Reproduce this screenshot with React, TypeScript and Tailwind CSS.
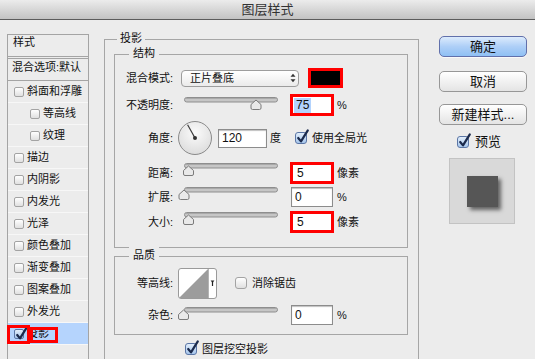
import React from "react";

type CheckProps = { checked?: boolean; size?: "sm" | "md" };

function Check({ checked = false, size = "md" }: CheckProps) {
  const dim = size === "sm" ? "w-[10px] h-[10px] rounded-[2px]" : "w-[12px] h-[12px] rounded-[3px]";
  const skin = checked
    ? "border-[#5b76a6] bg-linear-to-b from-[#e2eefb] to-[#a6c6ec]"
    : "border-[#a3a3a3] bg-linear-to-b from-white to-[#e0e0e0]";
  return (
    <span className={`relative inline-block shrink-0 border ${dim} ${skin}`}>
      {checked && (
        <svg
          className="absolute left-[0px] top-[-4px] overflow-visible"
          width="13"
          height="15"
          viewBox="0 0 13 15"
        >
          <path
            d="M2.2 9 L5 12.4 L11.8 1.4"
            fill="none"
            stroke="#1b2a4c"
            strokeWidth="2.2"
            strokeLinecap="round"
            strokeLinejoin="round"
          />
        </svg>
      )}
    </span>
  );
}

function Slider({ pos }: { pos: number }) {
  const p = pos;
  return (
    <svg width="102" height="14" viewBox="0 0 102 14" className="shrink-0 block">
      <rect x="6.5" y="0.5" width="93" height="4.5" rx="2.2" fill="#c6c6c6" stroke="#8e8e8e" />
      <line x1="8" y1="1.5" x2="98" y2="1.5" stroke="#a9a9a9" />
      <path
        d={`M${p} 3 L${p + 5} 7.5 L${p + 5} 11 Q${p + 5} 12.5 ${p + 3.5} 12.5 L${p - 3.5} 12.5 Q${p - 5} 12.5 ${p - 5} 11 L${p - 5} 7.5 Z`}
        fill="#e9e9e9"
        stroke="#7b7b7b"
      />
    </svg>
  );
}

function Dial() {
  return (
    <svg width="36" height="36" viewBox="0 0 36 36" className="shrink-0 block">
      <defs>
        <radialGradient id="dialg" cx="50%" cy="35%" r="70%">
          <stop offset="0" stopColor="#fbfbfb" />
          <stop offset="1" stopColor="#dadada" />
        </radialGradient>
      </defs>
      <circle cx="18" cy="18" r="16.5" fill="url(#dialg)" stroke="#8a8a8a" />
      <line x1="18" y1="18" x2="10.6" y2="4.8" stroke="#3a3a3a" strokeWidth="1.2" />
      <circle cx="18" cy="18" r="2" fill="#333" />
    </svg>
  );
}

function Contour() {
  return (
    <svg width="39" height="31" viewBox="0 0 39 31" className="shrink-0 block">
      <rect x="0.5" y="0.5" width="38" height="30" rx="2.5" fill="#fff" stroke="#9a9a9a" />
      <path d="M1 30 L30 1 L30 30 Z" fill="#9c9c9c" />
      <line x1="30.5" y1="1" x2="30.5" y2="30" stroke="#b4b4b4" />
      <path d="M32.6 12.5 L36.4 12.5 L34.5 15 Z" fill="#222" />
      <line x1="34.5" y1="14" x2="34.5" y2="18" stroke="#222" strokeWidth="1.2" />
    </svg>
  );
}

function RedInput({ children }: { children: React.ReactNode }) {
  return (
    <div className="ml-[10px] w-[44px] h-[22px] shrink-0 border-[3px] border-[#ff0000] bg-white flex items-center pl-[4px] text-[12px]">
      {children}
    </div>
  );
}

function PlainInput({ children }: { children: React.ReactNode }) {
  return (
    <div className="ml-[10px] w-[44px] h-[22px] shrink-0 p-[1px]">
      <div className="w-full h-full border border-[#8c8c8c] bg-white shadow-[inset_0_1px_1px_rgba(0,0,0,0.25)] flex items-center pl-[3px] text-[12px]">
        {children}
      </div>
    </div>
  );
}

function Label({ children }: { children: React.ReactNode }) {
  return <span className="w-[58px] shrink-0 text-right">{children}</span>;
}

function ListRow({
  label,
  indent = false,
  selected = false,
}: {
  label: string;
  indent?: boolean;
  selected?: boolean;
}) {
  return (
    <div
      className={`relative h-[22px] border-b border-[#f7f7f7] flex items-center ${indent ? "pl-[22px]" : "pl-[6px]"} ${selected ? "bg-[#b5d4fd]" : ""}`}
    >
      <Check size="sm" checked={selected} />
      <span className="ml-[3px]">{label}</span>
      {selected && (
        <>
          <span className="absolute left-[-1px] top-[2px] w-[23px] h-[19px] border-[3px] border-[#ff0000]" />
          <span className="absolute left-[22px] top-[4px] w-[28px] h-[16px] border-[3px] border-[#ff0000]" />
        </>
      )}
    </div>
  );
}

export default function App() {
  const list: { label: string; indent?: boolean; selected?: boolean }[] = [
    { label: "斜面和浮雕" },
    { label: "等高线", indent: true },
    { label: "纹理", indent: true },
    { label: "描边" },
    { label: "内阴影" },
    { label: "内发光" },
    { label: "光泽" },
    { label: "颜色叠加" },
    { label: "渐变叠加" },
    { label: "图案叠加" },
    { label: "外发光" },
    { label: "投影", selected: true },
  ];

  return (
    <div className="w-[535px] h-[359px] overflow-hidden bg-[#ececec] font-['Liberation_Sans','Noto_Sans_CJK_SC',sans-serif] text-[11px] text-[#111]">
      {/* Title bar */}
      <div className="h-[20px] border-b border-[#5c5c5c] bg-linear-to-b from-[#ececec] to-[#c3c3c3] flex items-center justify-center text-[13px] text-[#333] leading-none">
        图层样式
      </div>

      <div className="flex items-start">
        {/* Left list */}
        <div className="ml-[7px] mt-[14px] w-[82px] h-[340px] shrink-0 border border-[#a4a4a4]">
          <div className="h-[22px] border-b border-[#a4a4a4] pl-[5px] leading-[15px]">样式</div>
          <div className="mt-[1px] h-[23px] border-y border-[#a4a4a4] pl-[4px] leading-[16px]">混合选项:默认</div>
          {list.map((r) => (
            <ListRow key={r.label} label={r.label} indent={r.indent} selected={r.selected} />
          ))}
        </div>

        {/* Main */}
        <div className="relative ml-[15px] mt-[19px] w-[315px] shrink-0 border border-[#a6a6a6] pt-[14px] pl-[9px] pr-[10px]">
          <span className="absolute left-[12px] top-[-10px] bg-[#ececec] px-[3px] leading-[16px]">投影</span>

          {/* 结构 */}
          <div className="relative h-[194px] border border-[#a6a6a6] pt-[13px]">
            <span className="absolute left-[14px] top-[-10px] bg-[#ececec] px-[4px] leading-[16px]">结构</span>

            <div className="flex items-center h-[20px]">
              <Label>混合模式:</Label>
              <div className="ml-[8px] w-[118px] h-[17px] shrink-0 rounded-[4px] border border-[#9d9d9d] bg-linear-to-b from-white to-[#ebebeb] flex items-center justify-between pl-[8px] pr-[2px]">
                <span>正片叠底</span>
                <svg width="6" height="10" viewBox="0 0 6 10">
                  <path d="M3 0.8 L5.5 3.8 L0.5 3.8Z M3 9.2 L5.5 6.2 L0.5 6.2Z" fill="#333" />
                </svg>
              </div>
              <div className="ml-[9px] w-[35px] h-[20px] shrink-0 border-[3px] border-[#ff0000] bg-black" />
            </div>

            <div className="mt-[6px] flex items-center h-[22px]">
              <Label>不透明度:</Label>
              <div className="ml-[5px] self-start mt-[3px]">
                <Slider pos={78} />
              </div>
              <div className="ml-[10px] w-[44px] h-[22px] shrink-0 border-[3px] border-[#ff0000] bg-white flex items-center pl-[1px] text-[12px]">
                <span className="bg-[#b3d3fd] px-[2px] leading-[15px]">75</span>
              </div>
              <span className="ml-[3px]">%</span>
            </div>

            <div className="mt-[5px] flex items-center h-[34px]">
              <Label>角度:</Label>
              <div className="ml-[4px]">
                <Dial />
              </div>
              <div className="ml-[5px] w-[49px] h-[19px] shrink-0 border border-[#8c8c8c] bg-white shadow-[inset_0_1px_1px_rgba(0,0,0,0.25)] flex items-center pl-[3px] text-[12px]">
                120
              </div>
              <span className="ml-[3px]">度</span>
              <span className="ml-[14px] flex">
                <Check checked />
              </span>
              <span className="ml-[5px]">使用全局光</span>
            </div>

            <div className="mt-[7px] flex items-center h-[22px]">
              <Label>距离:</Label>
              <div className="ml-[5px] self-start mt-[1px]">
                <Slider pos={10.5} />
              </div>
              <RedInput>5</RedInput>
              <span className="ml-[3px]">像素</span>
            </div>

            <div className="mt-[2px] flex items-center h-[22px]">
              <Label>扩展:</Label>
              <div className="ml-[5px] self-start mt-[1px]">
                <Slider pos={6} />
              </div>
              <PlainInput>0</PlainInput>
              <span className="ml-[3px]">%</span>
            </div>

            <div className="mt-[3px] flex items-center h-[22px]">
              <Label>大小:</Label>
              <div className="ml-[5px] self-start mt-[1px]">
                <Slider pos={10.5} />
              </div>
              <RedInput>5</RedInput>
              <span className="ml-[3px]">像素</span>
            </div>
          </div>

          {/* 品质 */}
          <div className="relative mt-[8px] h-[79px] border border-[#a6a6a6] pt-[11px]">
            <span className="absolute left-[14px] top-[-10px] bg-[#ececec] px-[4px] leading-[16px]">品质</span>

            <div className="flex items-center h-[30px]">
              <Label>等高线:</Label>
              <div className="ml-[5px]">
                <Contour />
              </div>
              <span className="ml-[18px] flex">
                <Check />
              </span>
              <span className="ml-[5px]">消除锯齿</span>
            </div>

            <div className="mt-[6px] flex items-center h-[22px]">
              <Label>杂色:</Label>
              <div className="ml-[5px] self-start mt-[3px]">
                <Slider pos={5.5} />
              </div>
              <PlainInput>0</PlainInput>
              <span className="ml-[3px]">%</span>
            </div>
          </div>

          <div className="h-[28px] flex items-center pl-[71px]">
            <Check checked />
            <span className="ml-[5px]">图层挖空投影</span>
          </div>
        </div>

        {/* Right column */}
        <div className="ml-[20px] mt-[16px] w-[88px] shrink-0 flex flex-col text-[13px]">
          <div className="h-[21px] rounded-[5px] border border-[#6170ab] bg-linear-to-b from-[#dcebfc] via-[#aecff7] to-[#8fc0f4] flex items-center justify-center shadow-[0_1px_0_rgba(255,255,255,0.7)]">
            确定
          </div>
          <div className="mt-[14px] h-[21px] rounded-[5px] border border-[#979797] bg-linear-to-b from-white to-[#e4e4e4] flex items-center justify-center">
            取消
          </div>
          <div className="mt-[12px] h-[21px] rounded-[5px] border border-[#979797] bg-linear-to-b from-white to-[#e4e4e4] flex items-center justify-center">
            新建样式...
          </div>
          <div className="mt-[10px] h-[14px] flex items-center pl-[18px]">
            <Check checked />
            <span className="ml-[6px]">预览</span>
          </div>
          <div className="mt-[9px] ml-[10px] w-[66px] h-[66px] border border-[#c3c3c3] bg-[#d9d9d9] flex items-center justify-center">
            <div className="w-[31px] h-[31px] bg-[#565656] shadow-[3px_3px_4px_rgba(0,0,0,0.55)]" />
          </div>
        </div>
      </div>
    </div>
  );
}
